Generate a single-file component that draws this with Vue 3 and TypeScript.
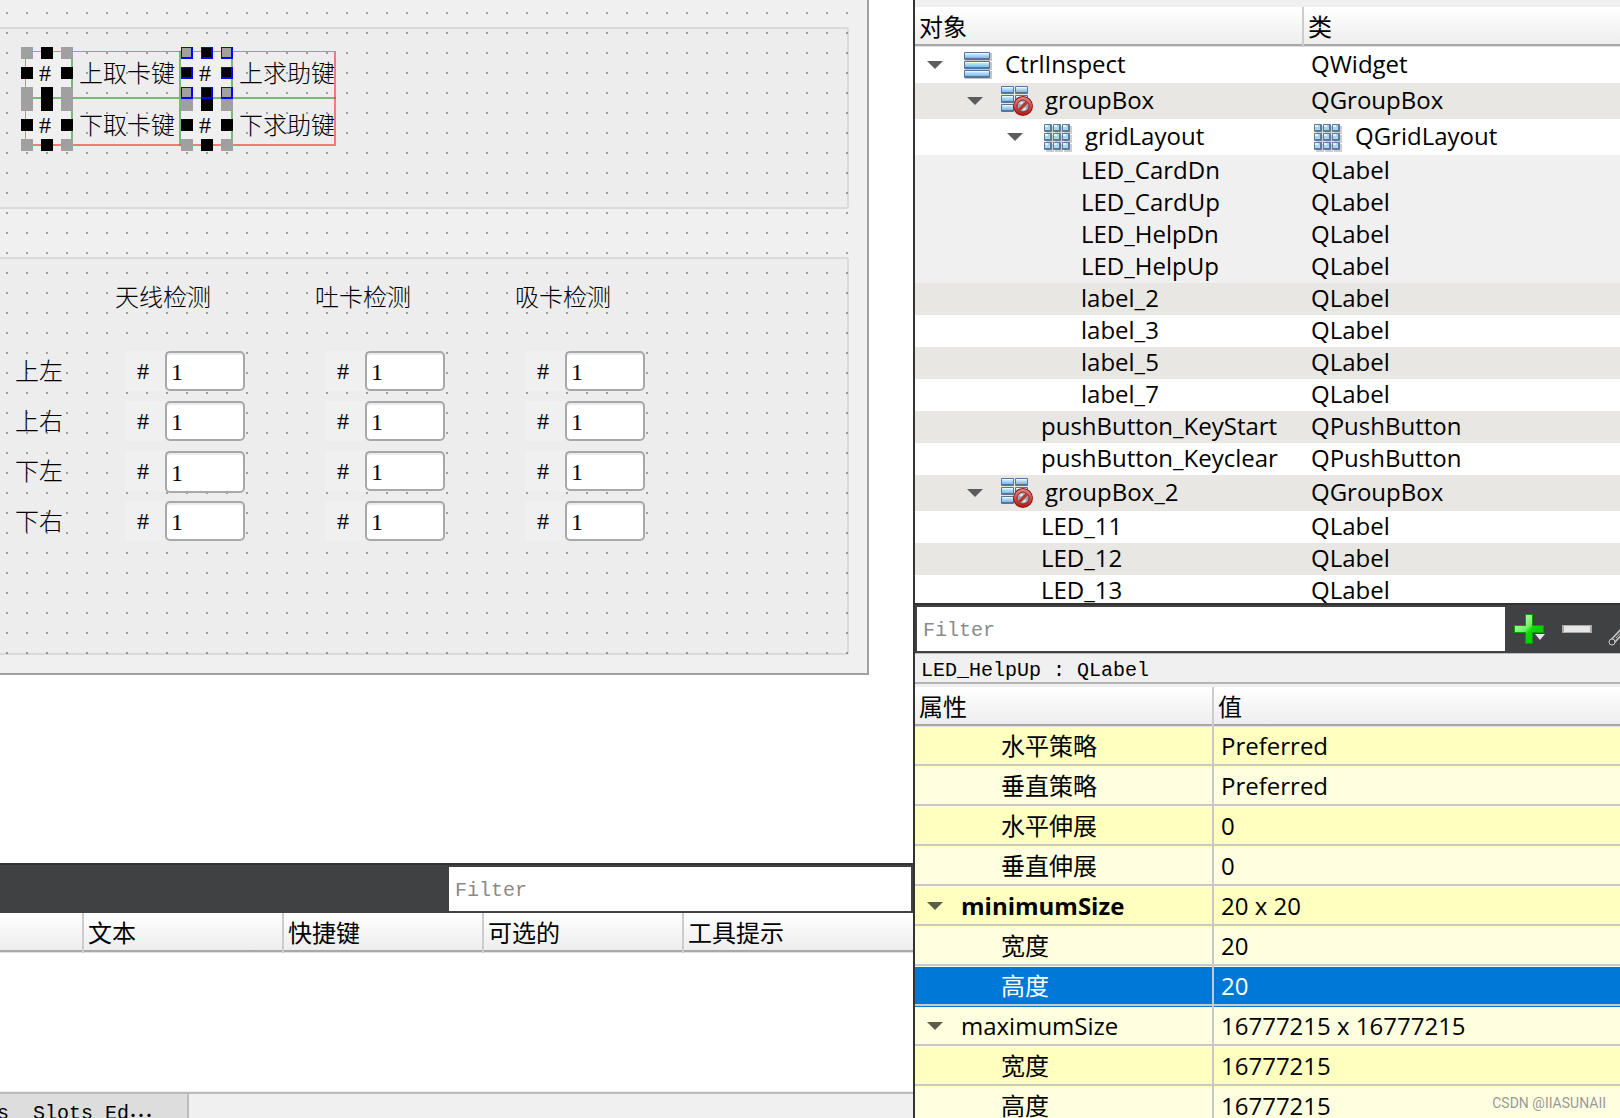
<script setup lang="ts">
type IconName = 'widget' | 'group' | 'grid'

interface TreeRow {
  name: string
  cls: string
  level: number
  icon?: IconName
  selected?: boolean
}

interface PropRow {
  name: string
  value: string
  shade: 'deep' | 'pale' | 'active'
  parent?: boolean
  bold?: boolean
}

const tree: TreeRow[] = [
  { name: 'CtrlInspect', cls: 'QWidget', level: 0, icon: 'widget' },
  { name: 'groupBox', cls: 'QGroupBox', level: 1, icon: 'group' },
  { name: 'gridLayout', cls: 'QGridLayout', level: 2, icon: 'grid' },
  { name: 'LED_CardDn', cls: 'QLabel', level: 3, selected: true },
  { name: 'LED_CardUp', cls: 'QLabel', level: 3, selected: true },
  { name: 'LED_HelpDn', cls: 'QLabel', level: 3, selected: true },
  { name: 'LED_HelpUp', cls: 'QLabel', level: 3, selected: true },
  { name: 'label_2', cls: 'QLabel', level: 3 },
  { name: 'label_3', cls: 'QLabel', level: 3 },
  { name: 'label_5', cls: 'QLabel', level: 3 },
  { name: 'label_7', cls: 'QLabel', level: 3 },
  { name: 'pushButton_KeyStart', cls: 'QPushButton', level: 2 },
  { name: 'pushButton_Keyclear', cls: 'QPushButton', level: 2 },
  { name: 'groupBox_2', cls: 'QGroupBox', level: 1, icon: 'group' },
  { name: 'LED_11', cls: 'QLabel', level: 2 },
  { name: 'LED_12', cls: 'QLabel', level: 2 },
  { name: 'LED_13', cls: 'QLabel', level: 2 },
]

// Indexes of the rows that carry the alternate background.
const shaded = new Set([1, 7, 9, 11, 13, 15])

const props: PropRow[] = [
  { name: '水平策略', value: 'Preferred', shade: 'deep' },
  { name: '垂直策略', value: 'Preferred', shade: 'pale' },
  { name: '水平伸展', value: '0', shade: 'deep' },
  { name: '垂直伸展', value: '0', shade: 'pale' },
  { name: 'minimumSize', value: '20 x 20', shade: 'deep', parent: true, bold: true },
  { name: '宽度', value: '20', shade: 'pale' },
  { name: '高度', value: '20', shade: 'active' },
  { name: 'maximumSize', value: '16777215 x 16777215', shade: 'pale', parent: true },
  { name: '宽度', value: '16777215', shade: 'deep' },
  { name: '高度', value: '16777215', shade: 'pale' },
]

const keyRows = [
  [{ text: '上取卡键', active: false }, { text: '上求助键', active: true }],
  [{ text: '下取卡键', active: false }, { text: '下求助键', active: false }],
]

const checks = ['天线检测', '吐卡检测', '吸卡检测']
const positions = ['上左', '上右', '下左', '下右']
const actionColumns = ['', '文本', '快捷键', '可选的', '工具提示']
const gridCells = [0, 1, 2, 3, 4, 5, 6, 7, 8]
</script>

<template>
  <div class="designer">
    <svg class="defs" aria-hidden="true">
      <defs>
        <linearGradient id="bar" x1="0" y1="0" x2="0" y2="1">
          <stop offset="0" stop-color="#dff3ff" />
          <stop offset="0.5" stop-color="#a6d8f8" />
          <stop offset="1" stop-color="#7fb8e0" />
        </linearGradient>
        <linearGradient id="plus" x1="0" y1="0" x2="1" y2="1">
          <stop offset="0" stop-color="#d8ffd0" />
          <stop offset="0.45" stop-color="#6cf060" />
          <stop offset="0.55" stop-color="#10d808" />
          <stop offset="1" stop-color="#00c000" />
        </linearGradient>
        <linearGradient id="stopRed" x1="0" y1="0" x2="0" y2="1">
          <stop offset="0" stop-color="#e08a86" />
          <stop offset="1" stop-color="#b81814" />
        </linearGradient>
      </defs>
    </svg>

    <main class="left">
      <section class="workspace">
        <div class="form">
          <div class="group group-keys">
            <div class="key-grid">
              <template v-for="(row, r) in keyRows" :key="r">
                <template v-for="(cell, c) in row" :key="c">
                  <div class="cell led-cell">
                    <span class="led">#
                      <span class="handles" :class="{ current: cell.active }">
                        <i v-for="n in 9" :key="n" :class="n === 5 ? 'none' : n % 2 ? 'corner' : 'mid'"></i>
                      </span>
                    </span>
                  </div>
                  <div class="cell text-cell">{{ cell.text }}</div>
                </template>
              </template>
            </div>
          </div>

          <div class="group group-checks">
            <div class="check-head">
              <span v-for="c in checks" :key="c">{{ c }}</span>
            </div>
            <div v-for="(p, r) in positions" :key="p" class="check-row">
              <span class="pos">{{ p }}</span>
              <div v-for="(c, i) in checks" :key="c" class="check">
                <label class="led" :for="`check-${r}-${i}`">#</label>
                <input
                  :id="`check-${r}-${i}`"
                  :class="{ tall: r === 2 && i === 0 }"
                  type="text"
                  value="1"
                  :aria-label="`${p} ${c}`"
                />
              </div>
            </div>
          </div>
        </div>
      </section>

      <section class="dock">
        <div class="toolbar">
          <input class="filter action-filter" type="text" placeholder="Filter" aria-label="Filter actions" />
        </div>
        <table class="actions">
          <thead>
            <tr>
              <th v-for="(h, i) in actionColumns" :key="i">{{ h }}</th>
            </tr>
          </thead>
        </table>
        <div class="actions-body"></div>
        <div class="tabs">
          <button type="button" class="tab">s&nbsp;&nbsp;Slots Ed<span class="dots" lang="zh-CN">…</span></button>
        </div>
      </section>
    </main>

    <aside class="right">
      <section class="tree-pane">
        <table class="tree">
          <colgroup>
            <col class="c-object" />
            <col />
          </colgroup>
          <thead>
            <tr>
              <th>对象</th>
              <th>类</th>
            </tr>
          </thead>
          <tbody>
            <tr
              v-for="(row, i) in tree"
              :key="row.name"
              :class="{ high: row.icon, shaded: shaded.has(i), picked: row.selected }"
            >
              <td>
                <div class="node" :class="`level-${row.level}`">
                  <svg v-if="row.icon" class="arrow" viewBox="0 0 16 8"><path d="M0 0h16L8 8z" fill="#5c5c5c" /></svg>
                  <span v-else class="arrow"></span>
                  <svg v-if="row.icon === 'widget'" class="icon" viewBox="0 0 34 34">
                    <g v-for="n in 3" :key="n">
                      <rect x="5" :y="-4 + n * 9" width="27" height="8" fill="#c4c4c4" />
                      <rect x="4" :y="-5 + n * 9" width="26" height="8" rx="1" fill="#587499" />
                      <rect x="5" :y="-4 + n * 9" width="24" height="5" fill="url(#bar)" />
                      <rect x="5" :y="-4 + n * 9" width="24" height="1" fill="#e8f6ff" />
                    </g>
                  </svg>
                  <svg v-else-if="row.icon === 'group'" class="icon" viewBox="0 0 34 34">
                    <g v-for="n in 3" :key="n">
                      <g v-for="m in 2" :key="m">
                        <rect :x="-13 + m * 14" :y="-7 + n * 9" width="13" height="8" rx="1" fill="#587499" />
                        <rect :x="-12 + m * 14" :y="-6 + n * 9" width="11" height="5" fill="url(#bar)" />
                        <rect :x="-12 + m * 14" :y="-6 + n * 9" width="11" height="1" fill="#e8f6ff" />
                      </g>
                    </g>
                    <circle cx="23" cy="22" r="10" fill="#8f1512" />
                    <circle cx="23" cy="22" r="9" fill="url(#stopRed)" />
                    <circle cx="23" cy="22" r="6" fill="#9aa6b6" stroke="#8f2a28" />
                    <path d="M20 20l3-2M23 26l3-2" stroke="#dfe6ee" stroke-width="2" />
                    <path d="M19 26l8-8" stroke="#c0302c" stroke-width="3" />
                  </svg>
                  <svg v-else-if="row.icon === 'grid'" class="icon" viewBox="0 0 34 34">
                    <g v-for="n in gridCells" :key="n">
                      <rect :x="6 + (n % 3) * 9" :y="6 + Math.floor(n / 3) * 9" width="8" height="8" fill="#d0cccc" />
                      <rect :x="4 + (n % 3) * 9" :y="4 + Math.floor(n / 3) * 9" width="8" height="8" rx="1" fill="#5f789c" />
                      <rect :x="5 + (n % 3) * 9" :y="5 + Math.floor(n / 3) * 9" width="5" height="5" fill="#a4d6f6" />
                      <rect :x="5 + (n % 3) * 9" :y="5 + Math.floor(n / 3) * 9" width="3" height="2" fill="#e4f5ff" />
                    </g>
                  </svg>
                  <span>{{ row.name }}</span>
                </div>
              </td>
              <td>
                <div class="node klass">
                  <svg v-if="row.icon === 'grid'" class="icon" viewBox="0 0 34 34">
                    <g v-for="n in gridCells" :key="n">
                      <rect :x="6 + (n % 3) * 9" :y="6 + Math.floor(n / 3) * 9" width="8" height="8" fill="#d0cccc" />
                      <rect :x="4 + (n % 3) * 9" :y="4 + Math.floor(n / 3) * 9" width="8" height="8" rx="1" fill="#5f789c" />
                      <rect :x="5 + (n % 3) * 9" :y="5 + Math.floor(n / 3) * 9" width="5" height="5" fill="#a4d6f6" />
                      <rect :x="5 + (n % 3) * 9" :y="5 + Math.floor(n / 3) * 9" width="3" height="2" fill="#e4f5ff" />
                    </g>
                  </svg>
                  <span>{{ row.cls }}</span>
                </div>
              </td>
            </tr>
          </tbody>
        </table>
      </section>

      <section class="prop-pane">
        <div class="toolbar">
          <input class="filter prop-filter" type="text" placeholder="Filter" aria-label="Filter properties" />
          <div class="tools">
            <button type="button" class="tool" aria-label="Add">
              <svg viewBox="0 0 34 34">
                <path d="M13 2h8v11h11v8H21v11h-8V21H2v-8h11z" fill="#0a9a0a" />
                <path d="M14 3h6v11h11v6H20v11h-6V20H3v-6h11z" fill="url(#plus)" />
                <path d="M23 22h10l-5 6z" fill="#e4e4e4" />
              </svg>
            </button>
            <button type="button" class="tool" aria-label="Remove">
              <svg viewBox="0 0 34 34">
                <rect x="2" y="13" width="30" height="8" fill="#a8a8a8" />
                <rect x="4" y="14" width="26" height="6" fill="#e6e6e6" />
              </svg>
            </button>
            <button type="button" class="tool" aria-label="Configure">
              <svg viewBox="0 0 34 34">
                <path d="M4 30L17 16" stroke="#c8c8c8" stroke-width="6" stroke-linecap="round" />
                <path d="M4 30L17 16" stroke="#4c4c4c" stroke-width="3" stroke-linecap="round" />
                <path d="M8 26L17 16" stroke="#b4b4b4" stroke-width="1" />
                <circle cx="4" cy="30" r="3" fill="#3c3d3e" stroke="#c8c8c8" />
                <path d="M16 17l-2-7 6-6M17 17l7 1 6-5" stroke="#c8c8c8" stroke-width="2" fill="none" />
              </svg>
            </button>
          </div>
        </div>
        <div class="object-name">LED_HelpUp : QLabel</div>
        <table class="props">
          <colgroup>
            <col class="c-prop" />
            <col />
          </colgroup>
          <thead>
            <tr>
              <th>属性</th>
              <th>值</th>
            </tr>
          </thead>
          <tbody>
            <tr v-for="(row, i) in props" :key="i" :class="row.shade">
              <td>
                <div class="prop" :class="{ parent: row.parent, bold: row.bold }">
                  <svg v-if="row.parent" class="arrow" viewBox="0 0 16 8"><path d="M0 0h16L8 8z" fill="#5c5c48" /></svg>
                  <span>{{ row.name }}</span>
                </div>
              </td>
              <td class="value">{{ row.value }}</td>
            </tr>
          </tbody>
        </table>
      </section>
    </aside>

    <div class="watermark">CSDN @IIASUNAII</div>
  </div>
</template>

<style>
body {
  margin: 0;
  background: #fff;
}
</style>

<style scoped>
* {
  box-sizing: border-box;
}

.designer {
  position: relative;
  display: grid;
  grid-template-columns: 915fr 705fr;
  height: 100vh;
  overflow: hidden;
  color: #000;
  font-family: "Open Sans", "Noto Sans CJK SC", sans-serif;
  font-size: 24px;
}

.defs {
  position: absolute;
  width: 0;
  height: 0;
}

.left {
  display: flex;
  flex-direction: column;
  min-width: 0;
  min-height: 0;
  border-right: 2px solid #333;
}

.workspace {
  flex: 1;
  min-height: 0;
  overflow: hidden;
}

/* Design surface */
.form {
  margin-right: 44px;
  padding: 27px 18px 18px 0;
  border: solid #a0a0a0;
  border-width: 0 2px 2px 0;
  background-color: #f0f0f0;
  background-image: linear-gradient(#f0f0f0, #f0f0f0), linear-gradient(#f0f0f0, #f0f0f0),
    conic-gradient(from 270deg at 2px 2px, #a0a0a0 90deg, transparent 0);
  background-repeat: no-repeat, no-repeat, repeat;
  background-size: 18px 100%, 100% 18px, 20px 20px;
  background-position: right top, left bottom, 6px 12px;
  font-family: "Noto Sans CJK SC", sans-serif;
  font-weight: 300;
}

.group {
  border: solid rgba(0, 0, 0, 0.09);
  border-width: 2px 2px 2px 0;
  border-radius: 0 3px 3px 0;
  background: rgba(0, 0, 0, 0.013);
  background-clip: padding-box;
}

.group-keys {
  height: 182px;
  padding: 22px 0 0 25px;
}

.group-checks {
  height: 398px;
  margin-top: 48px;
  padding-top: 19px;
}

.key-grid {
  position: relative;
  display: grid;
  grid-template-columns: 48px 108px 52px 103px;
  grid-template-rows: 48px 47px;
  width: 311px;
}

.key-grid::after {
  content: "";
  position: absolute;
  inset: 0;
  border: solid rgba(245, 60, 60, 0.65);
  border-width: 1px 2px 2px 1px;
}

.cell {
  display: flex;
  align-items: flex-end;
  padding-bottom: 1px;
  border-right: 2px solid #7ab87a;
  white-space: nowrap;
}

.cell:nth-child(-n + 4) {
  padding-bottom: 4px;
  border-bottom: 2px solid #7ab87a;
}

.cell:nth-child(4n) {
  border-right: 0;
}

.text-cell {
  padding-left: 6px;
  line-height: 42px;
}

.led-cell {
  justify-content: flex-end;
  padding-right: 4px;
  background: #f0f0f0;
}

.led {
  position: relative;
  width: 40px;
  height: 40px;
  padding-right: 4px;
  background: #f0f0f0;
  font-family: "Liberation Serif", serif;
  font-weight: 400;
  line-height: 40px;
  text-align: center;
}

.handles {
  position: absolute;
  inset: -6px;
  z-index: 1;
  display: grid;
  grid-template-columns: repeat(3, 12px);
  grid-template-rows: repeat(3, 12px);
  gap: 8px;
}

.handles .corner {
  background: #a0a0a0;
}

.handles .mid {
  background: #000;
}

.handles.current .corner,
.handles.current .mid {
  border: solid #00f;
  border-width: 1px 2px 2px 1px;
}

.check-head {
  display: flex;
  height: 40px;
  margin: 0 0 33px 115px;
  line-height: 36px;
}

.check-head span {
  flex: 0 0 200px;
}

.check-row {
  display: flex;
  height: 40px;
  margin-bottom: 10px;
}

.pos {
  flex: 0 0 125px;
  padding-left: 15px;
  line-height: 38px;
}

.check {
  display: flex;
  flex: 0 0 200px;
}

.check input {
  width: 80px;
  height: 40px;
  padding: 2px 4px 0;
  border: 2px solid #a8a8a8;
  border-radius: 5px;
  outline: 0;
  background: #fff;
  box-shadow: inset 0 2px 0 #ececec;
  color: #000;
  font-family: "Liberation Serif", serif;
  font-size: 24px;
}

.check input.tall {
  height: 42px;
}

/* Toolbars */
.toolbar {
  display: flex;
  height: 50px;
  padding: 2px 2px 2px 0;
  border-top: 2px solid #333;
  background: #404142;
}

.filter {
  min-width: 0;
  height: 44px;
  padding: 2px 6px 0;
  border: 0;
  outline: 0;
  background: #fff;
  font-family: "Liberation Mono", monospace;
  font-size: 20px;
}

.filter::placeholder {
  color: #8a8a8a;
  opacity: 1;
}

.action-filter {
  flex: 0 0 462px;
  margin-left: auto;
}

/* Tables */
table {
  width: 100%;
  border-spacing: 0;
  table-layout: fixed;
}

th {
  height: 40px;
  padding: 1px 0 1px 4px;
  background:
    linear-gradient(#e0e0e0, #e0e0e0) bottom / 100% 1px no-repeat,
    linear-gradient(#a8a8a8, #a8a8a8) bottom / 100% 3px no-repeat,
    linear-gradient(#fff, #ececec);
  border-right: 2px solid #ccc;
  font-size: 24px;
  font-weight: 400;
  line-height: 38px;
  text-align: left;
}

th:last-child {
  border-right: 0;
}

td {
  padding: 0;
}

.actions th {
  width: 200px;
}

.actions th:first-child {
  width: 84px;
}

.actions th:last-child {
  width: auto;
}

.actions-body {
  height: 139px;
  border-bottom: 1px solid #eee;
}

.tabs {
  display: flex;
  height: 26px;
  overflow: hidden;
  border-top: 2px solid #bbb;
  background: #f0f0f0;
}

.tab {
  display: flex;
  flex: 0 0 189px;
  height: 40px;
  margin: 0;
  padding: 0;
  border: 0;
  border-right: 2px solid #bbb;
  background: #ddd;
  color: #000;
  font-family: "Liberation Mono", monospace;
  font-size: 20px;
  line-height: 40px;
  text-indent: -3px;
}

.dots {
  font-family: "Noto Sans CJK SC", sans-serif;
  font-size: 24px;
  text-indent: 0;
}

/* Object inspector */
.right {
  display: grid;
  grid-template-rows: 603fr 515fr;
  min-width: 0;
  min-height: 0;
  height: 100vh;
}

.tree-pane,
.prop-pane {
  min-height: 0;
  overflow: hidden;
}

.tree-pane {
  border-top: 7px solid #f0f0f0;
}

.c-object {
  width: 389px;
}

.node {
  display: flex;
  align-items: center;
  height: 32px;
  line-height: 30px;
  white-space: nowrap;
}

.node > span:last-child {
  padding: 0 0 2px 1px;
}

.high .node {
  height: 36px;
}

.shaded {
  background: #e8e7e3;
}

.picked {
  background: #f0f0f0;
}

.arrow {
  flex: none;
  width: 16px;
  height: 8px;
  margin-right: 17px;
}

.icon {
  flex: none;
  width: 34px;
  height: 34px;
  margin-right: 10px;
}

.level-0 {
  padding-left: 12px;
}

.level-1 {
  padding-left: 52px;
}

.level-2 {
  padding-left: 92px;
}

.level-3 {
  padding-left: 132px;
}

.klass {
  padding-left: 6px;
}

/* Property editor */
.prop-filter {
  flex: 1;
  margin-left: 2px;
}

.tools {
  display: flex;
  flex: 0 0 115px;
  margin-right: -2px;
  overflow: hidden;
}

.tool {
  flex: 0 0 48px;
  height: 44px;
  padding: 0 0 0 7px;
  border: 0;
  background: none;
  text-align: left;
}

.tool svg {
  display: block;
  width: 34px;
  height: 34px;
}

.object-name {
  height: 34px;
  padding-left: 6px;
  border-top: 1px solid #bbb;
  border-bottom: 3px solid #f0f0f0;
  background: #f0f0f0;
  box-shadow: inset 0 -2px 0 #b4b4b4;
  font-family: "Liberation Mono", monospace;
  font-size: 20px;
  line-height: 34px;
  white-space: pre;
}

.c-prop {
  width: 299px;
}

.props td {
  height: 40px;
}

.props td:first-child {
  border-right: 2px solid #c8c8c8;
}

.deep {
  --tone: #ffffbf;
}

.pale {
  --tone: #ffffdf;
}

.active {
  --tone: #0078d7;
  color: #fff;
}

.props tbody td {
  padding-bottom: 3px;
  background: var(--tone);
  box-shadow: inset 0 -1px 0 var(--tone), inset 0 -3px 0 #c8c8c8;
  line-height: 36px;
  white-space: nowrap;
}

.prop {
  display: flex;
  align-items: center;
  padding-left: 86px;
}

.prop.parent {
  padding-left: 12px;
}

.prop .arrow {
  margin-right: 18px;
}

.bold {
  font-weight: 700;
}

.props tbody .value {
  padding-left: 7px;
}

.watermark {
  position: absolute;
  right: 14px;
  bottom: 5px;
  color: #9a9a8c;
  font-family: Roboto, sans-serif;
  font-size: 14px;
  line-height: 20px;
  text-shadow: 1px 1px 0 #fff;
}
</style>
